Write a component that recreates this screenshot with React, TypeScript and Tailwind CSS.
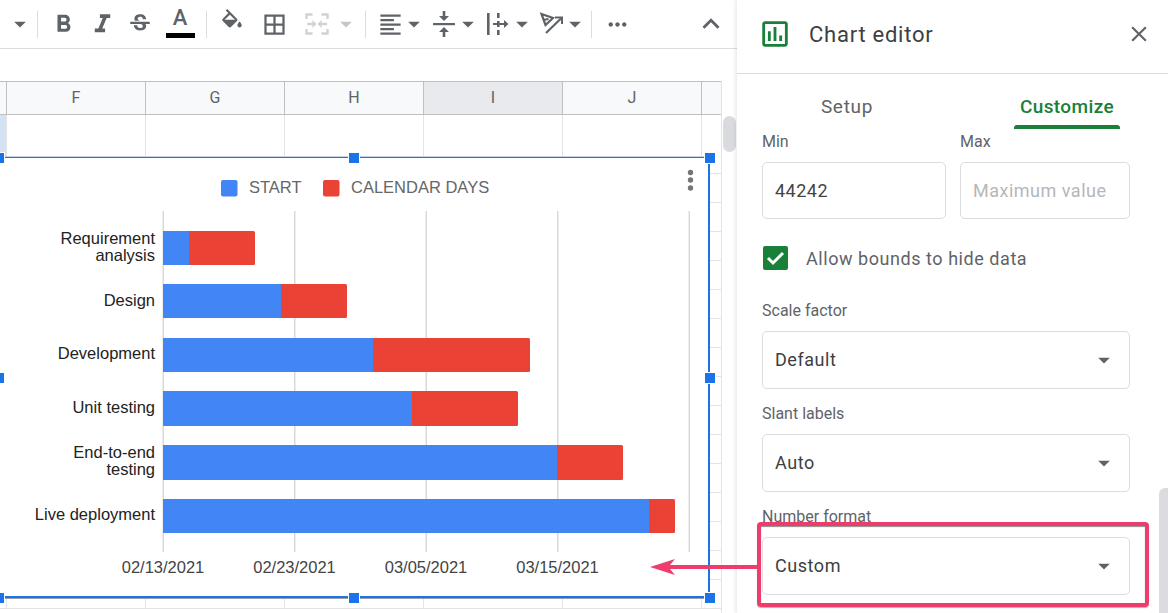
import { MdArrowDropDown, MdBorderAll, MdClose, MdExpandLess, MdFormatAlignLeft, MdFormatBold, MdFormatItalic, MdMoreHoriz, MdOutlineInsertChart, MdStrikethroughS } from 'react-icons/md'

const columns = [
  { name: 'F', selected: false },
  { name: 'G', selected: false },
  { name: 'H', selected: false },
  { name: 'I', selected: true },
  { name: 'J', selected: false },
]

const bars = [
  { y: 231, h: 34, start: 189, end: 255, lines: [{ t: 'Requirement', y: 244 }, { t: 'analysis', y: 261 }] },
  { y: 284, h: 34, start: 281, end: 347, lines: [{ t: 'Design', y: 306 }] },
  { y: 338, h: 34, start: 373, end: 530, lines: [{ t: 'Development', y: 359 }] },
  { y: 391, h: 35, start: 412, end: 518, lines: [{ t: 'Unit testing', y: 413 }] },
  { y: 445, h: 35, start: 557, end: 623, lines: [{ t: 'End-to-end', y: 458 }, { t: 'testing', y: 475 }] },
  { y: 499, h: 34, start: 649, end: 675, lines: [{ t: 'Live deployment', y: 520 }] },
]

const ticks = [
  { x: 163, label: '02/13/2021' },
  { x: 294.5, label: '02/23/2021' },
  { x: 426, label: '03/05/2021' },
  { x: 557.5, label: '03/15/2021' },
]

const handles = [
  'left-[-7px] top-[-6px]',
  'left-[348px] top-[-6px]',
  'left-[704px] top-[-6px]',
  'left-[-7px] top-[214px]',
  'left-[704px] top-[214px]',
  'left-[-7px] top-[434px]',
  'left-[348px] top-[434px]',
  'left-[704px] top-[434px]',
]

function Separator({ className }: { className: string }) {
  return <div className={`h-[27px] w-px bg-[#dadce0] shrink-0 ${className}`} />
}

function Caret({ className = '', light = false }: { className?: string; light?: boolean }) {
  return (
    <div className={`flex justify-center shrink-0 ${className}`}>
      <MdArrowDropDown size={28} className={`shrink-0 ${light ? 'text-[#c4c6c9]' : 'text-[#5f6368]'}`} />
    </div>
  )
}

function ToolIcon({ children, className = '' }: { children: React.ReactNode; className?: string }) {
  return <div className={`w-[38px] h-[38px] flex items-center justify-center shrink-0 text-[#5f6368] ${className}`}>{children}</div>
}

function FillIcon() {
  return (
    <svg width="26" height="26" viewBox="0 0 24 24" fill="currentColor">
      <path d="M16.560 8.940L7.620 0 6.210 1.410l2.380 2.380-5.150 5.150c-.59.59-.59 1.540 0 2.120l5.500 5.500c.29.29.68.44 1.060.44s.77-.15 1.060-.44l5.500-5.500c.59-.58.59-1.530 0-2.120zM5.210 10L10 5.210 14.790 10H5.210zM19 11.500s-2 2.170-2 3.500c0 1.100.9 2 2 2s2-.9 2-2c0-1.330-2-3.500-2-3.500z" />
    </svg>
  )
}

function MergeIcon() {
  return (
    <svg width="24" height="22" viewBox="0 0 24 22" fill="none" stroke="#d0d2d4" strokeWidth="2.400">
      <path d="M1.500 6V1.500h6M16.500 1.500h6V6M1.500 16v4.500h6M16.500 20.500h6V16" />
      <path d="M2 11h7M15 11h7" />
      <path d="M7.500 7l4 4-4 4zM16.500 7l-4 4 4 4z" fill="#d0d2d4" stroke="none" />
    </svg>
  )
}

function VAlignIcon() {
  return (
    <svg width="24" height="28" viewBox="0 0 24 28" fill="#5f6368">
      <rect x="1" y="13" width="22" height="2.200" />
      <path d="M10.700 1h2.600v5H17l-5 5-5-5h3.700zM12 17l5 5h-3.700v5h-2.600v-5H7z" />
    </svg>
  )
}

function WrapIcon() {
  return (
    <svg width="22" height="24" viewBox="0 0 22 24" fill="#5f6368">
      <rect x="0" y="1" width="2.600" height="22" />
      <rect x="10" y="1" width="2.600" height="5" />
      <rect x="10" y="9" width="2.600" height="6" />
      <rect x="10" y="18" width="2.600" height="5" />
      <path d="M6 10.900h11v-3l4.500 4.100-4.500 4.100v-3H6z" />
    </svg>
  )
}

function RotateIcon() {
  return (
    <svg width="24" height="24" viewBox="0 0 24 24" fill="none" stroke="#5f6368" strokeWidth="2.200">
      <path d="M2.500 2l4 11L14 6z" />
      <path d="M4.500 8l5-1" />
      <path d="M7 21L22 6.500" />
      <path d="M16 5.500H23V12" strokeWidth="2" />
    </svg>
  )
}

function Toolbar() {
  return (
    <div className="h-[49px] flex items-center border-b border-[#dadce0] pl-[7px] bg-white">
      <Caret className="w-[26px]" />
      <Separator className="ml-[4px]" />
      <ToolIcon className="ml-[6px]"><MdFormatBold size={29} /></ToolIcon>
      <ToolIcon className="ml-px"><MdFormatItalic size={31} /></ToolIcon>
      <ToolIcon><MdStrikethroughS size={26} /></ToolIcon>
      <div className="ml-[2px] w-[38px] h-[38px] flex flex-col items-center shrink-0">
        <span className="h-[26px] text-[22px] leading-[26px] font-medium text-[#5f6368] font-['Roboto',sans-serif]">A</span>
        <div className="mt-[2px] w-[29px] h-[5px] bg-black" />
      </div>
      <Separator className="ml-[7px]" />
      <ToolIcon className="ml-[6px] -mt-[5px]"><FillIcon /></ToolIcon>
      <ToolIcon className="ml-[4px]"><MdBorderAll size={27} /></ToolIcon>
      <ToolIcon className="ml-[5px]"><MergeIcon /></ToolIcon>
      <Caret light className="w-[20px]" />
      <Separator className="ml-[9px]" />
      <ToolIcon className="ml-[5px]"><MdFormatAlignLeft size={27} /></ToolIcon>
      <Caret className="w-[14px] -ml-[2px]" />
      <ToolIcon className="ml-[4px]"><VAlignIcon /></ToolIcon>
      <Caret className="w-[14px] -ml-[2px]" />
      <ToolIcon className="ml-[4px]"><WrapIcon /></ToolIcon>
      <Caret className="w-[14px] -ml-[2px]" />
      <ToolIcon className="ml-[3px]"><RotateIcon /></ToolIcon>
      <Caret className="w-[14px] -ml-[2px]" />
      <Separator className="ml-[9px]" />
      <ToolIcon className="ml-[6px]"><MdMoreHoriz size={27} /></ToolIcon>
      <ToolIcon className="ml-[56px]"><MdExpandLess size={34} /></ToolIcon>
    </div>
  )
}

function Sheet() {
  const rows = Array.from({ length: 16 }, (_, i) => i)
  return (
    <div className="flex flex-1 min-h-0">
      <div className="w-[721px] shrink-0 overflow-hidden">
        <div className="flex h-[34px] bg-[#f8f9fa] border-t border-b border-[#c0c0c0] font-['Roboto',sans-serif] text-[16px] text-[#5f6368]">
          <div className="w-[7px] border-r border-[#c0c0c0]" />
          {columns.map((c) => (
            <div
              key={c.name}
              className={`w-[139px] border-r border-[#c0c0c0] flex items-center justify-center ${c.selected ? 'bg-[#e8eaed]' : ''}`}
            >
              {c.name}
            </div>
          ))}
          <div className="w-[19px]" />
        </div>
        {rows.map((r) => (
          <div key={r} className={`flex border-b border-[#e2e3e3] ${r === 0 ? 'h-[59px]' : 'h-[29px]'}`}>
            <div className={`w-[7px] border-r border-[#e2e3e3] ${r === 0 ? 'bg-[#d3e3f5]' : ''}`} />
            {columns.map((c) => (
              <div key={c.name} className="w-[139px] border-r border-[#e2e3e3]" />
            ))}
          </div>
        ))}
      </div>
      <div className="w-[16px] border-l border-[#e2e3e3] bg-white pt-[35px] pl-[1px]">
        <div className="w-[13px] h-[36px] rounded-full bg-[#d9dbde]" />
      </div>
    </div>
  )
}

function ChartOverlay() {
  return (
    <div className="absolute left-0 top-[157px] w-[710px] h-[441px] bg-white shadow-[0_-1px_0_#c4d6ee,0_1px_0_#9aa0a6] border-t-[1.5px] border-b-2 border-r-2 border-[#1a73e8]">
      <svg width="708" height="438" viewBox="0 158 708 438" className="block">
        <rect x="221" y="180" width="16.500" height="16.500" rx="2" fill="#4285f4" />
        <text x="249" y="193" fontSize="16.500" fill="#666" fontFamily="'Liberation Sans', sans-serif">START</text>
        <rect x="323" y="180" width="16.500" height="16.500" rx="2" fill="#ea4335" />
        <text x="351" y="193" fontSize="16.500" fill="#666" fontFamily="'Liberation Sans', sans-serif">CALENDAR DAYS</text>
        <circle cx="690.500" cy="172.500" r="2.700" fill="#757575" />
        <circle cx="690.500" cy="180" r="2.700" fill="#757575" />
        <circle cx="690.500" cy="188" r="2.700" fill="#757575" />
        {[163, 294.5, 426, 557.5, 689].map((x) => (
          <rect key={x} x={x - 0.5} y="211" width="1.500" height="341" fill="#d9d9d9" />
        ))}
        {bars.map((b) => (
          <g key={b.y}>
            <rect x="163" y={b.y} width={b.end - 163} height={b.h} rx="1.500" fill="#ea4335" />
            <rect x="163" y={b.y} width={b.start - 163} height={b.h} fill="#4285f4" />
            {b.lines.map((l) => (
              <text key={l.t} x="155" y={l.y} textAnchor="end" fontSize="16.500" fill="#222" fontFamily="'Liberation Sans', sans-serif">{l.t}</text>
            ))}
          </g>
        ))}
        {ticks.map((t) => (
          <text key={t.label} x={t.x} y="573" textAnchor="middle" fontSize="16.500" fill="#444" fontFamily="'Liberation Sans', sans-serif">{t.label}</text>
        ))}
      </svg>
      {handles.map((h) => (
        <div key={h} className={`absolute w-[12px] h-[12px] bg-[#1a73e8] border border-white ${h}`} />
      ))}
    </div>
  )
}

function Field({ label, value, className = '', muted = false }: { label: string; value: string; className?: string; muted?: boolean }) {
  return (
    <div className={className}>
      <div className="text-[16px] leading-[20px] text-[#5f6368]">{label}</div>
      <div className={`mt-[10px] h-[57px] border border-[#dadce0] rounded-[5px] px-[12px] flex items-center text-[18px] tracking-[0.5px] ${muted ? 'text-[#b5b7ba]' : 'text-[#444]'}`}>
        {value}
      </div>
    </div>
  )
}

function SelectField({ label, value, className = '' }: { label: string; value: string; className?: string }) {
  return (
    <div className={className}>
      <div className="text-[16px] leading-[20px] text-[#5f6368]">{label}</div>
      <div className="mt-[10px] h-[58px] border border-[#dadce0] rounded-[5px] pl-[12px] pr-[11px] flex items-center justify-between text-[18px] tracking-[0.55px] text-[#3c4043]">
        <span className="-mt-[2px]">{value}</span>
        <MdArrowDropDown size={28} className="text-[#5f6368]" />
      </div>
    </div>
  )
}

function EditorPanel() {
  return (
    <div className="relative z-10 w-[431px] shrink-0 bg-white shadow-[-2px_0_3px_rgba(60,64,67,0.1)] font-['Roboto',sans-serif] overflow-hidden">
      <div className="h-[74px] border-b border-[#dadce0] flex items-center pl-[22px] pr-[16px] pb-[5px]">
        <MdOutlineInsertChart size={34} className="text-[#188038] -ml-[1px]" />
        <div className="ml-[17px] text-[22px] tracking-[0.75px] text-[#3c4043] flex-1">Chart editor</div>
        <MdClose size={26} className="text-[#5f6368]" />
      </div>
      <div className="flex h-[55px] pl-[25px] text-[19px] tracking-[0.4px]">
        <div className="w-[170px] flex items-center justify-center text-[#5f6368] h-[55px] pt-[12px] tracking-[0.7px]">Setup</div>
        <div className="relative ml-[82px] w-[106px] flex items-center justify-center text-[#188038] h-[55px] pt-[12px] font-medium">
          Customize
          <div className="absolute left-0 right-0 bottom-0 h-[4px] rounded-t-[3px] bg-[#188038]" />
        </div>
      </div>
      <div className="pl-[25px] pr-[38px] pt-[3px]">
        <div className="flex gap-[14px]">
          <Field label="Min" value="44242" className="w-[184px]" />
          <Field label="Max" value="Maximum value" muted className="w-[170px]" />
        </div>
        <div className="flex items-center mt-[27px] h-[24px]">
          <div className="w-[25px] h-[24px] ml-px rounded-[2px] bg-[#188038] flex items-center justify-center">
            <svg width="19" height="16" viewBox="0 0 19 16" fill="none" stroke="white" strokeWidth="3">
              <path d="M2 8l5 5L17 3" />
            </svg>
          </div>
          <span className="ml-[18px] text-[18px] tracking-[0.55px] text-[#5f6368]">Allow bounds to hide data</span>
        </div>
        <SelectField label="Scale factor" value="Default" className="mt-[31px]" />
        <SelectField label="Slant labels" value="Auto" className="mt-[15px]" />
        <SelectField label="Number format" value="Custom" className="mt-[15px]" />
      </div>
      <div className="absolute right-0 top-[488px] w-[9px] h-[125px] rounded-tl-[6px] bg-[#dadce0]" />
    </div>
  )
}

export default function App() {
  return (
    <div className="relative w-[1168px] h-[613px] overflow-hidden bg-white flex">
      <div className="w-[737px] shrink-0 flex flex-col">
        <Toolbar />
        <div className="h-[32px] bg-white" />
        <Sheet />
      </div>
      <EditorPanel />
      <ChartOverlay />
      {/* callout on top of the number format select */}
      <div className="absolute z-20 left-[757px] top-[522px] w-[392px] h-[85px] border-[4px] border-[#ee3d6c] rounded-[4px] shadow-[0_1px_1px_rgba(0,0,0,0.3),inset_0_1px_1px_rgba(0,0,0,0.45)]" />
      <svg className="absolute z-20 left-[648px] top-[555px]" width="112" height="24" viewBox="0 0 112 24">
        <path d="M2 12L27 4l-5 6h88v4H22l5 6z" fill="#ee3d6c" />
      </svg>
    </div>
  )
}
